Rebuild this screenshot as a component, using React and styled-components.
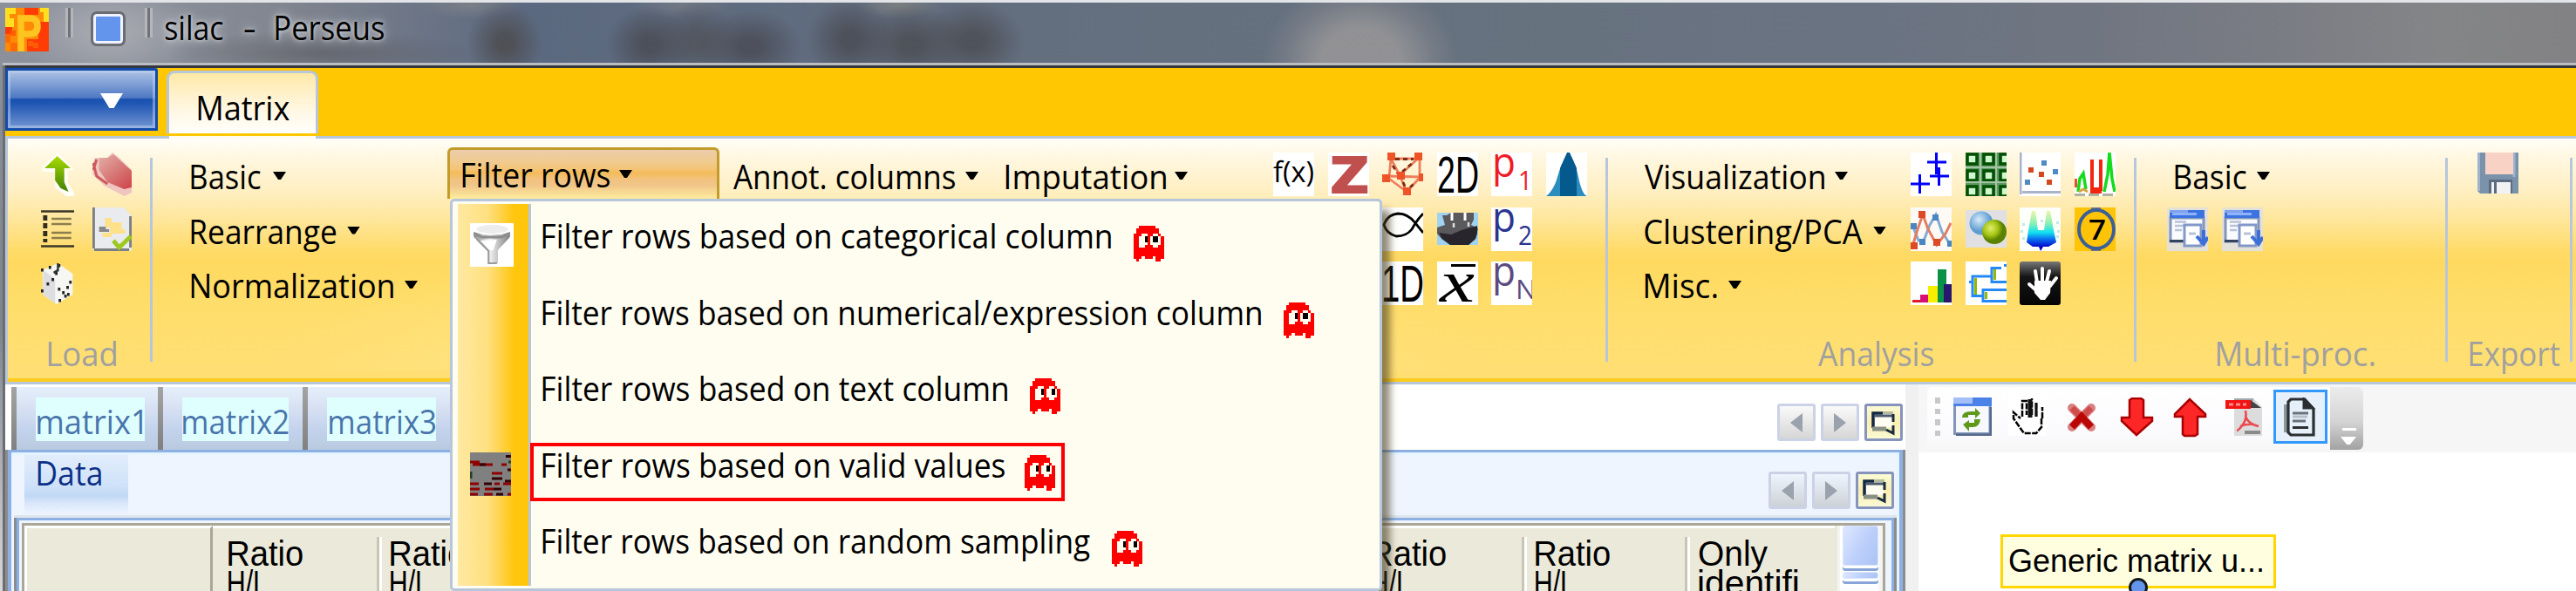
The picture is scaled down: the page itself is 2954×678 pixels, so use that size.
import React, { useMemo } from 'react';
import styled, { createGlobalStyle, css } from 'styled-components';

const UI = '"Open Sans", "Noto Sans", sans-serif';
const ARIAL = '"Liberation Sans", Arial, sans-serif';
const LINE = '#b7c6da';

const Global = createGlobalStyle`
  body { margin: 0; background: #fff; font-family: ${UI}; font-size: 39px; color: #000; }
  * { box-sizing: border-box; }
`;

/* ---------- text whose ink is fitted to a given width ---------- */
const FitBox = styled.span`
  display: block; flex: none; white-space: pre;
  width: ${p => p.$w}px; height: ${p => p.$lh}px; line-height: ${p => p.$lh}px;
  font-family: ${p => p.$font}; font-size: ${p => p.$size}px; color: ${p => p.$color};
`;
const FitInk = styled.span`display: inline-block; transform-origin: 0 0;`;

let ctx;
function measure(text, font) {
  if (!ctx) ctx = document.createElement('canvas').getContext('2d');
  ctx.font = font;
  const m = ctx.measureText(text);
  return { left: -m.actualBoundingBoxLeft, width: m.actualBoundingBoxRight + m.actualBoundingBoxLeft };
}
function Fit({ w, size = 39, lh = 50, font = UI, color = '#000', children }) {
  const t = useMemo(() => {
    const m = measure(children, `${size}px ${font}`);
    const k = w / m.width;
    return `translate(${1 - m.left * k}px, 2px) scaleX(${k})`;
  }, [children, w, size, font]);
  return (
    <FitBox $w={w} $size={size} $lh={lh} $font={font} $color={color}>
      <FitInk style={{ transform: t }}>{children}</FitInk>
    </FitBox>
  );
}

/* ---------- window ---------- */
const Window = styled.div`
  position: relative; width: 2954px; height: 678px; overflow: hidden;
  display: flex; flex-direction: column; background: #fff;
`;
const TitleBar = styled.header`
  height: 78px; flex: none; display: flex; align-items: flex-start; padding: 6px 0 0 6px;
  border-top: 3px solid #e2e4e8; position: relative;
  background:
    radial-gradient(ellipse 112px 90px at 1560px 66px, rgba(150,149,151,.9) 40%, rgba(140,140,145,.4) 75%, transparent 100%),
    radial-gradient(ellipse 44px 46px at 579px 46px, rgba(78,78,82,.9) 20%, transparent 100%),
    radial-gradient(ellipse 50px 44px at 745px 48px, rgba(74,76,84,.85) 20%, transparent 100%),
    radial-gradient(ellipse 46px 44px at 800px 44px, rgba(78,79,84,.7) 20%, transparent 100%),
    radial-gradient(ellipse 60px 42px at 860px 50px, rgba(74,76,86,.85) 20%, transparent 100%),
    radial-gradient(ellipse 50px 48px at 975px 42px, rgba(74,76,84,.85) 20%, transparent 100%),
    radial-gradient(ellipse 60px 46px at 1045px 48px, rgba(76,78,84,.85) 20%, transparent 100%),
    radial-gradient(ellipse 60px 46px at 1115px 44px, rgba(76,78,84,.85) 20%, transparent 100%),
    radial-gradient(ellipse 60px 16px at 540px 3px, rgba(150,145,140,.45), transparent),
    radial-gradient(ellipse 60px 16px at 780px 3px, rgba(150,145,140,.35), transparent),
    radial-gradient(ellipse 50px 16px at 1030px 3px, rgba(150,145,130,.5), transparent),
    radial-gradient(ellipse 180px 26px at 370px 58px, rgba(88,88,94,.6), transparent),
    radial-gradient(ellipse 110px 56px at 124px 34px, rgba(185,185,190,.7), transparent),
    linear-gradient(90deg, #8b909b 0, #8b909b 150px, #80858f 330px, #6c7586 480px, #5b6980 600px, #606c7e 950px, #65707f 1350px, #67727f 1800px, #6a7382 2150px, #707681 2400px, #7a7c84 2600px, #848587 2800px, #828284 2954px);
`;
const TitleEdge = styled.div`
  position: absolute; left: 3px; right: 0; bottom: 0; height: 6px;
  background: #34373e; border-top: 3px solid #bbbdc3;
`;
const TitleRule = styled.i`
  width: 9px; height: 34px; margin-left: ${p => p.$gap}px;
  background: #707277; border: solid #b4b6bb; border-width: 0 3px;
`;
const QuickButton = styled.i`
  width: 40px; height: 40px; margin: 4px 0 0 20px; border-radius: 7px; background: #6495ed;
  border: 3px solid #6b6d71; box-shadow: inset 0 0 0 3px #eef3ff;
`;
const Caption = styled.h1`
  display: flex; margin: -5px 0 0 13px; font-size: 39px; font-weight: normal; gap: 24px;
  text-shadow: 0 0 12px rgba(255,255,255,.75), 0 0 5px rgba(255,255,255,.6);
`;

const TabStrip = styled.nav`
  height: 78px; flex: none; margin-left: 6px; background: #ffc602; display: flex; gap: 10px;
`;
const FileButton = styled.button`
  width: 175px; height: 72px; padding: 0; border: 3px solid #124bab; border-radius: 0 3px 0 0;
  background: linear-gradient(#aec3e6, #7c9cd4 25%, #4f79c3 47%, #1850ae 50%, #1d55b3 56%, #4774c2 78%, #7296d2);
  box-shadow: inset 0 0 0 3px rgba(190,208,238,.5);
  display: flex; align-items: center; padding-left: 106px;
`;
const RibbonTab = styled.div`
  width: 174px; height: 72px; margin-top: 3px; padding: 12px 0 0 32px;
  border: 3px solid ${LINE}; border-bottom: 0; border-radius: 9px 9px 0 0;
  background: linear-gradient(#ffe9a6, #fff1cb 35%, #fff8e6 65%, #fffefa);
`;
const Arrow = styled.i`
  flex: none; width: ${p => p.$w || 15}px; height: ${p => p.$h || 9}px;
  margin: 3px 0 0 ${p => p.$gap || 0}px; background: ${p => p.$c || '#000'};
  clip-path: polygon(0 0, 100% 0, 60% 100%, 40% 100%);
`;

const Ribbon = styled.section`
  height: 285px; flex: none; display: flex; margin-left: 6px;
  border: 3px solid ${LINE}; border-right: 0; position: relative;
  background: linear-gradient(#fffef8 0, #fff7e0 22px, #ffefc2 60px, #ffe79f 90px, #ffe183 110px, #ffda66 130px, #ffd95f 142px, #ffdc66 170px, #ffde6e 210px, #ffdf74 275px, #ffcc1e 275px);
`;
const TabGap = styled.i`
  position: absolute; left: 185px; top: -3px; width: 168px; height: 3px; background: #fffbee;
`;
const Group = styled.div`
  position: relative; flex: none; width: ${p => p.$w}px; padding: 16px 0 0 ${p => p.$pl}px;
  display: flex; align-items: flex-start;
  ${p => p.$lit && css`background: radial-gradient(ellipse 700px 150px at 50% 100%, rgba(255,240,180,.5), transparent) 0 0 / 100% 266px no-repeat;`}
  &::after { content: ''; position: absolute; right: 0; top: 22px; width: 3px; height: 234px; background: ${LINE}; }
`;
const GroupLabel = styled.footer`
  position: absolute; left: ${p => p.$x}px; top: 219px;
`;
const Column = styled.div`
  display: flex; flex-direction: column; gap: 12.5px; flex: none;
  width: ${p => p.$w}px;
`;
const Command = styled.div`
  display: flex; align-items: center; height: 50px; padding-left: ${p => p.$indent || 0}px;
  ${p => p.$open && css`
    height: 59px; margin: -6px 0; width: 312px; padding: 0 0 4px 13px;
    border: 3px solid #c39b2a; border-bottom: 0; border-radius: 6px 6px 0 0;
    background: linear-gradient(#ebcdaa, #f0ca8e 25%, #f5c374 40%, #f4bb59 46%, #f2c27e 60%, #f0c588 72%, #f8dc94 88%, #ffec9e);
  `}
`;
const IconGrid = styled.div`
  display: grid; grid-template-columns: repeat(${p => p.$n}, ${p => p.$pitch || 62.5}px);
  grid-auto-rows: 50px; row-gap: 12.5px; flex: none;
`;
const Svg = styled.svg`display: block; width: ${p => p.$w || 47}px; height: ${p => p.$h || 50}px; overflow: hidden;`;

/* ---------- drop-down ---------- */
const Menu = styled.div`
  position: absolute; left: 516px; top: 228px; width: 1069px; height: 450px; z-index: 3;
  display: flex; padding: 3px 0 3px 6px; background: #fffdf0;
  border: 3px solid ${LINE}; border-radius: 5px; box-shadow: 12px 10px 9px -3px rgba(70,60,30,.6);
`;
const MenuGutter = styled.div`
  width: 84px; height: 438px; flex: none; border-right: 3px solid ${LINE};
  display: grid; grid-template-rows: repeat(5, 87.6px);
  padding: 22px 0 0 14px;
  background: linear-gradient(90deg, #ffe9a2, #ffe080 42%, #ffcf3a 66%, #ffc60c 80%);
`;
const MenuItems = styled.div`display: flex; flex-direction: column; height: 438px;`;
const MenuItem = styled.div`
  position: relative; display: flex; height: 87.5px; flex: none; padding: 9px 0 0 12px; width: max-content;
`;
const Ghost = styled.svg`width: 35px; height: 41px; margin: 16px 0 0 ${p => p.$gap}px; flex: none;`;
const Highlight = styled.i`
  position: absolute; left: -1px; top: 11px; width: 613px; height: 67px; border: 4px solid #f00;
`;

/* ---------- lower panes ---------- */
const Lower = styled.main`flex: 1; display: flex; margin-left: 6px; min-height: 0;`;
const DataPane = styled.section`width: 2179px; flex: none; display: flex; flex-direction: column; padding-top: 3px;`;
const MatrixTabs = styled.div`height: 72px; flex: none; display: flex; padding-left: 7px; position: relative;`;
const MatrixTab = styled.div`
  width: ${p => p.$w}px; padding: 12px 0 0 ${p => p.$pl}px; position: relative;
  background: linear-gradient(#e5effb, #d6e0f2 35%, #c2d2ec 70%, #b9cadf);
  &::before { content: ''; position: absolute; left: 0; top: 0; bottom: 0; width: 6px; background: linear-gradient(#a4a4a4, #808080); }
`;
const TabMark = styled.div`
  width: ${p => p.$w}px; height: 50px; padding-left: ${p => p.$pl}px; background: #dfffff;
`;
const NavButtons = styled.div`
  position: absolute; right: ${p => p.$r}px; top: ${p => p.$t}px; display: flex; gap: 6px;
`;
const NavButton = styled.i`
  width: 44px; height: 43px; border-radius: 3px; border: 3px solid ${p => (p.$on ? '#8693bd' : '#cbd2e6')};
  background: ${p => p.$on ? 'linear-gradient(#fafad4, #faedae 50%, #fafad4)' : `linear-gradient(${p.$tint ? '#edf5fd, #cdd2d7' : '#fafafa, #d6d6d6'})`};
`;
const Outer = styled.div`
  flex: 1; display: flex; flex-direction: column; position: relative; background: #eef5ff;
  border: solid #8c8c8c; border-width: 0 3px; 
  box-shadow: inset 4px 3px 0 #8cb0e4, inset -4px 0 0 #8cb0e4, inset -7px 6px 0 #e4f5ff; min-height: 0;
`;
const DataTab = styled.div`
  width: 119px; height: 69px; margin: 6px 0 0 19px; padding-left: 14px; flex: none;
  background: linear-gradient(#e2edfc, #cfe2f9 50%, #c1d8f5 68%, #d9e7fa 80%, #eef5ff);
`;
const Inner = styled.div`
  flex: 1; margin: 3px 7px 0; border: solid #8c8c8c; border-width: 0 3px;
  box-shadow: inset 3px 3px 0 #8cb0e4, inset -3px 0 0 #8cb0e4, 0 -3px 0 #dfe5ec;
  padding: 6px 10px 0 6px; min-height: 0;
`;
const Table = styled.div`
  height: 100%; border: solid #aba796; border-width: 3px 3px 0; display: flex; background: #ebe9da;
`;
const HeadCell = styled.div`
  width: ${p => p.$w}px; flex: none; position: relative; border-top: 3px solid #fff;
  padding: 10px 0 0 ${p => p.$pl || 9}px; overflow: hidden;
  ${p => p.$first && css`border-left: 3px solid #fff; border-right: 3px solid #aba796;`}
  &::after {
    content: ''; display: ${p => (p.$rule ? 'block' : 'none')}; position: absolute; right: 0; top: 10px; bottom: 0; width: 6px;
    background: linear-gradient(90deg, #c8c5b4 50%, #fff 50%);
  }
`;
const Scroll = styled.div`
  width: 52px; margin: 0 0 0 auto; padding: 0 3px 0 6px; flex: none;
  background: linear-gradient(90deg, #f4f4f0 3px, #fff 3px 45px, #eee);
  display: flex; flex-direction: column; gap: 3px;
`;
const Thumb = styled.i`
  width: 41px; height: ${p => p.$h}px; flex: none; border: 1px solid #dbe5ff; border-radius: 3px;
  background: linear-gradient(120deg, #dde7ff, #bccffb 55%, #abc4f4);
  box-shadow: 0 3px 0 #fff, 0 6px 0 #87a4d8; margin-bottom: 4px;
`;

const FlowPane = styled.section`
  flex: 1; padding-left: 15px; display: flex; flex-direction: column; background: #f0f0f0;
`;
const ToolArea = styled.div`height: 78px; flex: none; background: #f6f6f6; padding: 3px 0 0 10px; display: flex;`;
const ToolStrip = styled.div`
  width: 464px; height: 72px; border-radius: 6px; background: linear-gradient(#fff, #fbfafd 70%, #f7f7f7);
  display: flex; align-items: flex-start; padding: 12px 0 0 9px;
`;
const Grip = styled.i`
  width: 6px; height: 44px; margin: 0 15px 0 0;
  background: repeating-linear-gradient(#c9c7cb 0 6.5px, transparent 6.5px 12.5px);
`;
const Tool = styled.div`width: ${p => p.$w}px; flex: none;`;
const ToggledTool = styled.div`
  width: 62px; height: 62px; margin-top: -9px; padding: 6px 0 0 9px; flex: none;
  border: 3px solid #3399ff; background: #e5f0fb;
`;
const Overflow = styled.div`
  width: 38px; height: 72px; margin-left: -2px; border-radius: 0 6px 6px 0; flex: none;
  background: linear-gradient(#ececec, #d4d4d4 55%, #a2a2a2);
  display: flex; flex-direction: column; align-items: center; padding-top: 47px; gap: 4px;
  &::before { content: ''; width: 16px; height: 3px; flex: none; background: #fff; margin-left: 6px; }
`;
const Canvas = styled.div`flex: 1; position: relative; background: #fff;`;
const Node = styled.div`
  position: absolute; left: 94px; top: 94px; width: 316px; height: 62px; padding: 1px 0 0 6px;
  border: 3px solid #ffd700; background: #ffffe0;
`;
const Port = styled.i`
  position: absolute; left: 241px; top: 144px; width: 22px; height: 22px; border-radius: 50%;
  border: 3px solid #15181c; background: #6495ed;
`;
const LeftEdge = styled.i`
  position: absolute; left: 0; top: 75px; bottom: 0; width: 6px;
  background: linear-gradient(90deg, transparent 3px, #6d6d6f 3px), linear-gradient(#8a9099, #7d8590 50%, #c5c7cb 90%, #d6d7d9);
`;

/* ---------- icons ---------- */
const Icon = ({ bg, w, h, vb = '0 0 47 50', children }) => (
  <Svg $w={w} $h={h} viewBox={vb} preserveAspectRatio="none">
    {bg && <rect width="100" height="100" fill={bg} />}
    {children}
  </Svg>
);
const Dots = ({ pts, s = 3, fill }) => pts.map(([x, y], i) => <rect key={i} x={x} y={y} width={s} height={s} fill={fill} />);

const Logo = () => (
  <Icon w={50} h={50} vb="0 0 50 50">
    <rect width="50" height="50" fill="#ff8a05" />
    <path d="M22 0h16v8H22zM0 22h8v8H0zM38 16h12v34H25V36h13z" fill="#ff3c05" />
    <path d="M0 0h12v7H5v9H0zM40 0h10v16h-6V5h-4zM0 12h10v10H0z" fill="#ffdf20" />
    <path d="M0 30h6v10H0zM6 40h8v10H6z" fill="#ff6a05" />
    <Dots s={6} fill="#ff5c05" pts={[[32, 40], [6, 26], [26, 38]]} />
    <path d="M14 12h4v38M18 12h10q9 0 9 9t-9 9H20" fill="none" stroke="#ffc41f" strokeWidth="7.500" />
  </Icon>
);
const UpArrow = () => (
  <Icon w={38}>
    <defs><linearGradient id="ga" x2="0" y2="1"><stop offset="0" stopColor="#a9dc00" /><stop offset="1" stopColor="#3f7f05" /></linearGradient></defs>
    <path d="M24 0L47 20H38V34L47 46V50H36L20 40V22H2V16Z" fill="#fffef6" />
    <path d="M23 4L42 18H33V34L39 45L28 41L20 32V18H5Z" fill="url(#ga)" />
  </Icon>
);
const RedBrick = () => (
  <Icon w={45}>
    <defs><linearGradient id="gr" x2=".8" y2="1"><stop offset="0" stopColor="#e2b0a8" /><stop offset="1" stopColor="#cf4c50" /></linearGradient></defs>
    <path d="M3 6H18L24 0L32 6L47 20V46L38 50L14 38L0 25V14Z" fill="#f0c5c0" />
    <path d="M8 6H18L25 2L32 8L47 21V40L38 42L18 34L8 20Z" fill="url(#gr)" />
    <path d="M1 12L5 27L18 36M5 8L1 20" stroke="#cc5a5c" strokeWidth="3" fill="none" />
  </Icon>
);
const ListIcon = () => (
  <Icon w={38}>
    <path d="M0 4.500H47M0 44.500H47" stroke="#3b3729" strokeWidth="2.600" />
    <path d="M15 13H43M15 19H43M15 29H43M15 35H43" stroke="#8b7d4c" strokeWidth="2.600" />
    <path d="M6 9V40" stroke="#312d20" strokeWidth="6" strokeDasharray="6 3" />
  </Icon>
);
const SheetIcon = () => (
  <Icon w={45}>
    <path d="M0 0H38L47 10V50H3L0 47Z" fill="#e9ebee" />
    <path d="M1.500 0V47M2 48.500H44M45.500 10V46" stroke="#7c7f84" strokeWidth="3" fill="none" />
    <path d="M15 12h8v5h12v8h4v5H23v4H12v-5h9v-6h-6z" fill="#ffe18a" />
    <path d="M8 22h8v3h4v3H8z" fill="#888" />
    <path d="M25 38L32 46L46 33" stroke="#9cc820" strokeWidth="5" fill="none" />
  </Icon>
);
const DiceIcon = () => (
  <Icon w={38}>
    <path d="M2 10L24 2L45 14V38L22 49L3 38Z" fill="#f6f6f2" />
    <path d="M3 10L20 20V48L3 38Z" fill="#dcdee2" />
    <Dots s={3.500} fill="#222" pts={[[0, 8], [11, 5], [24, 3], [20, 12], [15, 19], [0, 32], [8, 24], [24, 30], [30, 34], [36, 28], [33, 38], [25, 43], [40, 22], [37, 36]]} />
    <path d="M24 2V10L18 13" stroke="#333" strokeWidth="3" fill="none" />
  </Icon>
);
const Glyph = ({ x, y, size, len, fill = '#000', font = ARIAL, weight, style, children }) => (
  <text x={x} y={y} fontSize={size} textLength={len} lengthAdjust="spacingAndGlyphs" fill={fill} fontFamily={font} fontWeight={weight} fontStyle={style}>{children}</text>
);
const FxIcon = () => <Icon bg="#fff"><Glyph x={0} y={34} size={33} len={47} font={UI}>f(x)</Glyph></Icon>;
const ZIcon = () => <Icon bg="#fff"><Glyph x={2} y={47} size={61} len={45} fill="#c0504d" font={UI} weight="800">Z</Glyph></Icon>;
const NetIcon = () => (
  <Icon>
    <path d="M10 7H41M10 7L8 28M10 7L20 26M41 7L20 26M43 7V28M5 27L44 28M8 30L28 45L44 28M20 26L28 45" stroke="#ee7f5c" strokeWidth="2.800" fill="none" />
    <path d="M15 7.500H36M23 22L36 11M12 15L18 24M24 34L27 41M32 40L38 34" stroke="#7d2c18" strokeWidth="2.800" strokeDasharray="5 4" fill="none" />
    <Dots s={9} fill="#ef5328" pts={[[6, 0], [37, 0], [0, 25], [17, 22], [42, 24], [24, 40]]} />
  </Icon>
);
const TwoD = () => <Icon bg="#fff"><Glyph x={0} y={46} size={60} len={48}>2D</Glyph></Icon>;
const OneD = () => <Icon bg="#fff"><Glyph x={-1} y={46} size={60} len={49}>1D</Glyph></Icon>;
const PIcon = ({ sub, c, weight }) => (
  <Icon bg="#fff">
    <Glyph x={1} y={28} size={47} len={27} fill={c} font={UI} weight={weight}>p</Glyph>
    <Glyph x={sub === 'N' ? 28 : 31} y={43} size={31} len={sub === 'N' ? 24 : 16} fill={c} font={UI}>{sub}</Glyph>
  </Icon>
);
const BellIcon = () => (
  <Icon bg="#fff">
    <path d="M0 50Q9 43 13 28T25 0Q33 8 37 28T47 50Z" fill="#2b8cc0" />
    <path d="M16 50V18L24 0H27L35 18V50Z" fill="#045a8d" />
  </Icon>
);
const FishIcon = () => <Icon bg="#fff"><path d="M47 7Q40 14 34 25Q28 33 16 33Q5 30 2 20Q6 8 18 7Q30 7 38 18L47 29" fill="none" stroke="#000" strokeWidth="2.800" /></Icon>;
const CatIcon = () => (
  <Icon vb="0 0 47 50">
    <rect y="6" width="47" height="37" fill="#9fd3f1" />
    <path d="M6 9H11L16 6H42V14L39 20L47 24L44 36L36 43H15L5 36L0 30V23L9 20Z" fill="#5a5a5c" />
    <path d="M2 29L16 31L28 26L46 21V30L44 36L36 43H15L6 36Z" fill="#28262c" />
    <path d="M17 6V15M32 6V15" stroke="#fff" strokeWidth="3" />
    <path d="M19 18V23M36 17V22" stroke="#ddd" strokeWidth="2.500" />
  </Icon>
);
const XBar = () => (
  <Icon bg="#fff">
    <path d="M16 4.500H44" stroke="#000" strokeWidth="3" />
    <Glyph x={3} y={46} size={68} len={40} font={'"Liberation Serif", serif'} style="italic">x</Glyph>
  </Icon>
);
const PlusIcon = () => <Icon bg="#fff"><path d="M29.500 0V25M19 11H41M32.500 17V38M22 27H44M10.500 25V47M0 36H22" stroke="#0000fb" strokeWidth="3" /></Icon>;
const GridIcon = () => (
  <Icon bg="#5f9a62">
    {[0, 19, 38].map(x => [0, 19, 37].map(y => <rect key={x + '-' + y} x={x + 2} y={y + 2} width="11" height="11" fill="#d0f7d0" stroke="#045004" strokeWidth="3.600" />))}
    <path d="M17 0V50M35 0V50M0 17H47M0 34H47" stroke="#a3c4a5" strokeWidth="2" />
  </Icon>
);
const ScatterIcon = () => (
  <Icon bg="#fff">
    <path d="M1 0V48M3 45.500H47" stroke="#a9b3cb" strokeWidth="3" />
    <Dots s={6} fill="#d4471f" pts={[[10, 17], [22, 22], [31, 31]]} />
    <Dots s={6} fill="#4f8ac4" pts={[[25, 9], [38, 19], [6, 31]]} />
  </Icon>
);
const PeaksIcon = () => (
  <Icon bg="#fff">
    <path d="M4 45L6 30L10 24L13 42M34 45L38 25L40 0L43 30L46 45" stroke="#12dc1c" strokeWidth="3.500" fill="none" />
    <path d="M20 8V42H30V8" stroke="#f2260e" strokeWidth="4" fill="none" />
    <path d="M18 45H31" stroke="#f2260e" strokeWidth="4" />
    <path d="M1 30V40" stroke="#e64c30" strokeWidth="4" />
    <path d="M0 48.500H47" stroke="#aeb2a5" strokeWidth="3" strokeDasharray="12 4" />
    <path d="M5 45L10 42L15 45" stroke="#d9a441" strokeWidth="3" fill="none" />
  </Icon>
);
const ProfileIcon = () => (
  <Icon bg="#fdfaf6">
    <path d="M2 20L9 38L15 38L22 20L29 8L36 28L45 42" stroke="#84abd4" strokeWidth="3" fill="none" />
    <path d="M2 45L8 25L14 8L20 25L30 43L40 30L46 18" stroke="#e27e62" strokeWidth="3" fill="none" />
    <Dots s={8} fill="#dc4a26" pts={[[9, 4], [0, 40], [26, 36]]} /><Dots s={7} fill="#4a86c2" pts={[[25, 8], [10, 36], [0, 18], [42, 38]]} />
  </Icon>
);
const BallsIcon = () => (
  <Icon>
    <defs>
      <radialGradient id="b1" cx=".4" cy=".35"><stop offset="0" stopColor="#d6ebfa" /><stop offset="1" stopColor="#5d9bd0" /></radialGradient>
      <radialGradient id="b2" cx=".35" cy=".35"><stop offset="0" stopColor="#e2ee70" /><stop offset=".6" stopColor="#a5c414" /><stop offset="1" stopColor="#5a8200" /></radialGradient>
    </defs>
    <rect y="3" width="47" height="43" fill="#e0e0e2" />
    <circle cx="18" cy="18" r="13.500" fill="url(#b1)" /><circle cx="33" cy="28" r="14" fill="url(#b2)" />
  </Icon>
);
const DensityIcon = () => (
  <Icon bg="#fdfffb">
    <defs><linearGradient id="dg" gradientUnits="userSpaceOnUse" x1="0" x2="0" y1="3" y2="46"><stop offset="0" stopColor="#f3f7a8" /><stop offset=".35" stopColor="#8cf0b4" /><stop offset=".6" stopColor="#10e0f0" /><stop offset=".78" stopColor="#0a6cf0" /><stop offset="1" stopColor="#0000c8" /></linearGradient></defs>
    <path d="M14 4H18L21 26H28L31 4H35L39 26L42 40L33 45H27L24 50L22 45H15L8 40L10 26Z" fill="url(#dg)" />
    <Dots s={3} fill="#c3e8ea" pts={[[3, 18], [1, 26], [3, 34], [42, 16], [43, 26], [42, 32], [24, 14]]} />
  </Icon>
);
const SevenIcon = () => (
  <Icon bg="#ffc408">
    <path d="M19 1.500H30M19 48.500H30" stroke="#6d7680" strokeWidth="4" />
    <ellipse cx="25" cy="25" rx="20" ry="22" fill="none" stroke="#3c6096" strokeWidth="4" />
    <Glyph x={16} y={37} size={32} len={20} font={UI} weight="600">7</Glyph>
  </Icon>
);
const BarsIcon = () => (
  <Icon bg="#fff">
    <path d="M2 44h10v3H2z" fill="#e01b24" /><path d="M11 38h10v9H11z" fill="#d90f78" /><path d="M20 28h11v19H20z" fill="#f8ee00" />
    <path d="M31 9h10v38H31z" fill="#0a9246" /><path d="M38 26h9v21h-9z" fill="#28166f" />
  </Icon>
);
const TreeIcon = () => (
  <Icon bg="#fff">
    <path d="M4 23.500H8V17H30V7.500H41M8 23V39.500H20M30 17V23.500H47M20 39V32.500H47M20 39V45.500H47M44 4.500H47" stroke="#2489f5" strokeWidth="3" fill="none" />
    <path d="M11.500 19V38M33.500 9V21M23.500 35V43" stroke="#93b800" strokeWidth="3" />
  </Icon>
);
const PalmIcon = () => (
  <Icon>
    <defs><linearGradient id="pg" x2="0" y2="1"><stop offset="0" stopColor="#777" /><stop offset=".35" stopColor="#151515" /><stop offset="1" stopColor="#050505" /></linearGradient></defs>
    <rect width="47" height="50" rx="3" fill="url(#pg)" />
    <path d="M20 24L18 11M26 22V8M31 23L34 11M35 28L42 19M20 34L11 26" stroke="#fff" strokeWidth="4" strokeLinecap="round" />
    <path d="M17 22H36L35 36L29 44H24L17 36Z" fill="#fff" />
  </Icon>
);
const WindowsIcon = () => (
  <Icon>
    <rect width="47" height="50" fill="#e4e1d8" />
    <path d="M4 12H42V39H4Z" fill="#fafbff" stroke="#8395b8" strokeWidth="3" /><path d="M3 38.500H20" stroke="#34445f" strokeWidth="3" />
    <rect x="3" y="3" width="40" height="9" fill="#3c73e0" /><path d="M3 4.500H24" stroke="#7ea2ee" strokeWidth="3" /><path d="M6 7.500H34" stroke="#8fb2fa" strokeWidth="3" />
    <path d="M9 16.500H22M9 21H19M9 26H17" stroke="#b8c2d6" strokeWidth="2.500" />
    <rect x="20" y="20" width="19" height="24" fill="#fff" stroke="#8298c8" strokeWidth="3" />
    <path d="M25 30H33" stroke="#b8c2d6" strokeWidth="3" /><path d="M42 26V42M34 33L42 42L47 34" stroke="#3c6fd8" strokeWidth="4" fill="none" />
  </Icon>
);
const SaveIcon = () => (
  <Icon>
    <path d="M0 0H47V47H3L0 44Z" fill="#7b92ab" /><path d="M1.500 0V44M42 0V28" stroke="#9fb4cc" strokeWidth="3" />
    <path d="M9 0h32v25H9z" fill="#f9d2c6" /><path d="M13 31h27v16H13z" fill="#5b6b80" /><path d="M16 34h22v13H16z" fill="#f2f2f2" /><path d="M20.500 34V47" stroke="#5b6b80" strokeWidth="3" />
  </Icon>
);
const FunnelIcon = () => (
  <Icon w={50} bg="#fff">
    <defs><linearGradient id="fg"><stop offset="0" stopColor="#8d8d8d" /><stop offset=".45" stopColor="#f0f0f0" /><stop offset="1" stopColor="#7f7f7f" /></linearGradient></defs>
    <ellipse cx="24" cy="7" rx="17" ry="5" fill="#ededed" />
    <path d="M4 10L14 13H34L43 10V16L30 31V46H20V31L4 16Z" fill="url(#fg)" />
    <path d="M4 12L13 16H34L43 12" fill="none" stroke="#8d8d8d" strokeWidth="3" />
    <path d="M11 20L21 31H25L29 19Z" fill="#fff" />
    <path d="M7 18L20 32V46H29" fill="none" stroke="#9b9b9b" strokeWidth="2" />
  </Icon>
);
const HeatIcon = () => (
  <Icon bg="#808080">
    <path d="M0 11H11M3 14H26M36 14H42M25 24H37M0 36H10M28 36H34M38 36H47M0 42H11M17 42H27M0 48H9M16 48H26M43 48H47" stroke="#900000" strokeWidth="3" />
    <path d="M41 4.500H47M43 20H47M25 30H37M40 33H47M16 36H25M27 42H36M30 48H38M11 14H18" stroke="#300" strokeWidth="3" />
    <path d="M1 22V30M44 11H47" stroke="#243f2a" strokeWidth="3" />
  </Icon>
);
const PinIcon = () => (
  <Icon w={38} h={37} vb="0 0 38 37">
    <path d="M8 9H29V24H8Z" fill="#fffdf2" />
    <path d="M7 25V8H18" stroke="#12263f" strokeWidth="3.500" fill="none" /><path d="M18 7.500H30" stroke="#b4b89c" strokeWidth="3" /><path d="M9 11H30" stroke="#4c5b6c" strokeWidth="3" />
    <path d="M30 9V18" stroke="#1c2c3c" strokeWidth="3" />
    <path d="M6 26H22" stroke="#888f85" strokeWidth="5" /><path d="M22 27L30 31V22" stroke="#1c2c3c" strokeWidth="3" fill="none" />
  </Icon>
);
const Tri = ({ left }) => <Icon w={38} h={37} vb="0 0 38 37"><path d={left ? 'M26 8V30L12 19Z' : 'M12 8V30L26 19Z'} fill="#9aa3ad" /></Icon>;
const RefreshIcon = () => (
  <Icon w={44} h={44} vb="0 0 44 44">
    <path d="M1.500 3H42V41.500H1.500Z" fill="#f6f8fd" stroke="#8095b8" strokeWidth="3" /><rect width="44" height="10" fill="#4b82e8" /><rect width="22" height="7" fill="#a4bff8" />
    <path d="M43 11V43H3" stroke="#56698a" strokeWidth="3" fill="none" />
    <path d="M10 23Q10 16 20 16H25V12L31 18L25 24V20H17V23ZM31 25Q30 34 22 34H18V39L11 31L18 26V29H24V25Z" fill="#5f991a" />
  </Icon>
);
const HandIcon = () => (
  <Icon w={44} h={44} vb="0 0 44 44">
    <rect width="44" height="44" fill="#fff" />
    <path d="M16 22V4H21V20M27 20V1M32 22V6M39 24V11M38 24V34L32 41H18L13 34L6 24V17L14 24" stroke="#000" strokeWidth="2.500" fill="none" strokeDasharray="7 1.500" />
    <path d="M25 2V23" stroke="#111" strokeWidth="5" /><path d="M32 6V22" stroke="#111" strokeWidth="3" />
  </Icon>
);
const CrossIcon = () => (
  <Icon w={34} h={44} vb="0 0 34 44">
    <path d="M6 12L28 34M28 12L6 34" stroke="#d98080" strokeWidth="10" strokeLinecap="round" /><path d="M6 12L17 23L28 12" stroke="#d04c4c" strokeWidth="7" fill="none" /><path d="M6 34L17 22L28 34" stroke="#bb0606" strokeWidth="8" fill="none" />
  </Icon>
);
const DownIcon = () => <Icon w={40} h={46} vb="0 0 40 46"><path d="M11 3L14 1H24L27 3V23H37V27L19 43L2 27V23H11Z" fill="#fd2727" stroke="#a00" strokeWidth="2.500" /></Icon>;
const RaiseIcon = () => <Icon w={42} h={46} vb="0 0 42 46"><path d="M12 42L14 44H26L29 42V22H38V19L20 2L3 19V22H12Z" fill="#fd2727" stroke="#a00" strokeWidth="2.500" /></Icon>;
const PdfIcon = () => (
  <Icon w={44} h={46} vb="0 0 44 46">
    <path d="M10 1H32L42 11V44H10Z" fill="#dcdcdc" /><path d="M10 1H32V4H10Z" fill="#9fa9ae" /><path d="M29 3L41 12H29Z" fill="#454545" />
    <rect y="3" width="29" height="10" fill="#f21313" /><path d="M4 8H24" stroke="#ff8c8c" strokeWidth="3" strokeDasharray="5 3" />
    <path d="M23 15Q25 24 20 31T13 38M23 22Q27 31 38 33M17 33Q24 30 33 31" stroke="#ea4c50" strokeWidth="2.600" fill="none" /><path d="M22 40H40" stroke="#8a8a8a" strokeWidth="4" />
  </Icon>
);
const DocIcon = () => (
  <Icon w={36} h={46} vb="0 0 36 46">
    <path d="M2.500 8V40" stroke="#8e959b" strokeWidth="5" />
    <path d="M8 2H24L34 13V43H8L5 40V5Z" fill="#e5f0fb" stroke="#2c2f31" strokeWidth="3.200" /><path d="M23 2V12H33Z" fill="#2c2f31" stroke="#2c2f31" strokeWidth="3" />
    <path d="M10 18H28M10 27H25" stroke="#6b7176" strokeWidth="3" /><path d="M10 22H27" stroke="#b6bfc8" strokeWidth="3" /><path d="M10 34.500H28" stroke="#2c2f31" strokeWidth="3" />
  </Icon>
);
const GhostIcon = ({ gap, even }) => (
  <Ghost $gap={gap} viewBox="0 0 35 41" shapeRendering="crispEdges">
    <path d="M6 0H25V3H29V9H31V12H35V38H31V41H25V35H22V38H13V35H9V38H6V41H3V38H0V9H3V3H6Z" fill="#f00" />
    <path d="M6 12H9V9H16V22H13V25H6ZM19 12H22V9H28V12H31V22H28V25H22V22H19Z" fill="#fffdf0" />
    <path d={even ? 'M13 12h3v7h-3zM25 12h4v7h-4z' : 'M13 12h3v7h-3zM22 12h6v7h-6z'} fill="#000" />
  </Ghost>
);

/* ---------- content ---------- */
const menuItems = [
  { text: 'Filter rows based on categorical column', w: 652, gap: 27 },
  { text: 'Filter rows based on numerical/expression column', w: 824, gap: 27 },
  { text: 'Filter rows based on text column', w: 533, gap: 27, even: true },
  { text: 'Filter rows based on valid values', w: 530, gap: 24, even: true, marked: true },
  { text: 'Filter rows based on random sampling', w: 628, gap: 26, even: true },
];
const Cmd = ({ text, w, gap = 12, open, indent }) => (
  <Command $open={open} $indent={indent}><Fit w={w}>{text}</Fit><Arrow $gap={gap} /></Command>
);
const Empty = () => <i />;
const Nav = ({ r, t, tint }) => (
  <NavButtons $r={r} $t={t}>
    <NavButton $tint={tint}><Tri left /></NavButton>
    <NavButton $tint={tint}><Tri /></NavButton>
    <NavButton $on><PinIcon /></NavButton>
  </NavButtons>
);
const Head = ({ lines, ...rest }) => (
  <HeadCell {...rest}>
    {lines.map(([t, w]) => <Fit key={t} w={w} size={40} lh={34} font={ARIAL}>{t}</Fit>)}
  </HeadCell>
);
const ratio = [['Ratio', 85], ['H/L', 44]];
const ratioWidths = [194, 187.5, 187.5, 187.5, 187.5, 187.5, 187.5, 187.5, 187.5];

export default function App() {
  return (
    <Window>
      <Global />
      <TitleBar>
        <Logo />
        <TitleRule $gap={19} />
        <QuickButton />
        <TitleRule $gap={22} />
        <Caption>
          <Fit w={67}>silac</Fit><Fit w={12}>-</Fit><Fit w={124}>Perseus</Fit>
        </Caption>
        <TitleEdge />
      </TitleBar>
      <TabStrip>
        <FileButton><Arrow $w={26} $h={17} $c="#fff" /></FileButton>
        <RibbonTab><Fit w={105}>Matrix</Fit></RibbonTab>
      </TabStrip>
      <Ribbon>
        <TabGap />
        <Group $w={166} $pl={38}>
          <IconGrid $n={2} $pitch={59}>
            <UpArrow /><RedBrick /><ListIcon /><SheetIcon /><DiceIcon />
          </IconGrid>
          <GroupLabel $x={45}><Fit w={78} color="#a0a0a0">Load</Fit></GroupLabel>
        </Group>
        <Group $w={1669} $pl={43} $lit>
          <Column $w={295}>
            <Cmd text="Basic" w={80} gap={15} /><Cmd text="Rearrange" w={166} gap={14} /><Cmd text="Normalization" w={232} gap={14} />
          </Column>
          <Column $w={327}><Cmd open text="Filter rows" w={169} gap={12} /></Column>
          <Column $w={312}><Cmd text="Annot. columns" w={254} gap={13} /></Column>
          <Column $w={308}><Cmd text="Imputation" w={184} gap={11} /></Column>
          <IconGrid $n={6}>
            <FxIcon /><ZIcon /><NetIcon /><TwoD /><PIcon sub="1" c="#ee1c25" weight="500" /><BellIcon />
            <Empty /><Empty /><FishIcon /><CatIcon /><PIcon sub="2" c="#2a3590" weight="500" /><Empty />
            <Empty /><Empty /><OneD /><XBar /><PIcon sub="N" c="#5c4a80" />
          </IconGrid>
        </Group>
        <Group $w={606} $pl={41}>
          <Column $w={306}>
            <Cmd text="Visualization" w={206} gap={13} /><Cmd text="Clustering/PCA" w={250} gap={13} /><Cmd text="Misc." w={83} gap={14} />
          </Column>
          <IconGrid $n={4}>
            <PlusIcon /><GridIcon /><ScatterIcon /><PeaksIcon />
            <ProfileIcon /><BallsIcon /><DensityIcon /><SevenIcon />
            <BarsIcon /><TreeIcon /><PalmIcon />
          </IconGrid>
          <GroupLabel $x={240}><Fit w={132} color="#a0a0a0">Analysis</Fit></GroupLabel>
        </Group>
        <Group $w={357} $pl={35}>
          <IconGrid $n={2}>
            <Cmd text="Basic" w={82} gap={13} indent={8} /><Empty />
            <WindowsIcon /><WindowsIcon />
          </IconGrid>
          <GroupLabel $x={91}><Fit w={181} color="#a0a0a0">Multi-proc.</Fit></GroupLabel>
        </Group>
        <Group $w={143} $pl={34}>
          <SaveIcon />
          <GroupLabel $x={24}><Fit w={103} color="#a0a0a0">Export</Fit></GroupLabel>
        </Group>
      </Ribbon>
      <Lower>
        <DataPane>
          <MatrixTabs>
            <MatrixTab $w={168} $pl={28}><TabMark $w={125} $pl={1}><Fit w={120} color="#4a75ac">matrix1</Fit></TabMark></MatrixTab>
            <MatrixTab $w={166} $pl={28}><TabMark $w={122} $pl={0}><Fit w={121} color="#4a75ac">matrix2</Fit></TabMark></MatrixTab>
            <MatrixTab $w={190} $pl={28}><TabMark $w={125} $pl={2}><Fit w={121} color="#4a75ac">matrix3</Fit></TabMark></MatrixTab>
            <Nav r={3} t={19} />
          </MatrixTabs>
          <Outer>
            <DataTab><Fit w={73} lh={36} color="#0d3187">Data</Fit></DataTab>
            <Nav r={10} t={25} tint />
            <Inner>
              <Table>
                <HeadCell $w={216} $first />
                {ratioWidths.map((w, i) => <Head key={i} $w={w} $pl={i ? 9 : 17} $rule lines={ratio} />)}
                <Head $w={166} lines={[['Only', 79], ['identifi', 114]]} />
                <Scroll><Thumb $h={46} /><Thumb $h={8} /></Scroll>
              </Table>
            </Inner>
          </Outer>
        </DataPane>
        <FlowPane>
          <ToolArea>
            <ToolStrip>
              <Grip />
              <Tool $w={63}><RefreshIcon /></Tool>
              <Tool $w={67}><HandIcon /></Tool>
              <Tool $w={61}><CrossIcon /></Tool>
              <Tool $w={60}><DownIcon /></Tool>
              <Tool $w={61}><RaiseIcon /></Tool>
              <Tool $w={55}><PdfIcon /></Tool>
              <ToggledTool><DocIcon /></ToggledTool>
            </ToolStrip>
            <Overflow><Arrow $w={18} $h={9} $c="#fff" $gap={4} /></Overflow>
          </ToolArea>
          <Canvas>
            <Node><Fit w={290} size={36} font={ARIAL}>Generic matrix u...</Fit></Node>
            <Port />
          </Canvas>
        </FlowPane>
      </Lower>
      <LeftEdge />
      <Menu>
        <MenuGutter>
          <FunnelIcon /><Empty /><Empty /><HeatIcon />
        </MenuGutter>
        <MenuItems>
          {menuItems.map(m => (
            <MenuItem key={m.text}>
              {m.marked && <Highlight />}
              <Fit w={m.w}>{m.text}</Fit>
              <GhostIcon gap={m.gap} even={m.even} />
            </MenuItem>
          ))}
        </MenuItems>
      </Menu>
    </Window>
  );
}
